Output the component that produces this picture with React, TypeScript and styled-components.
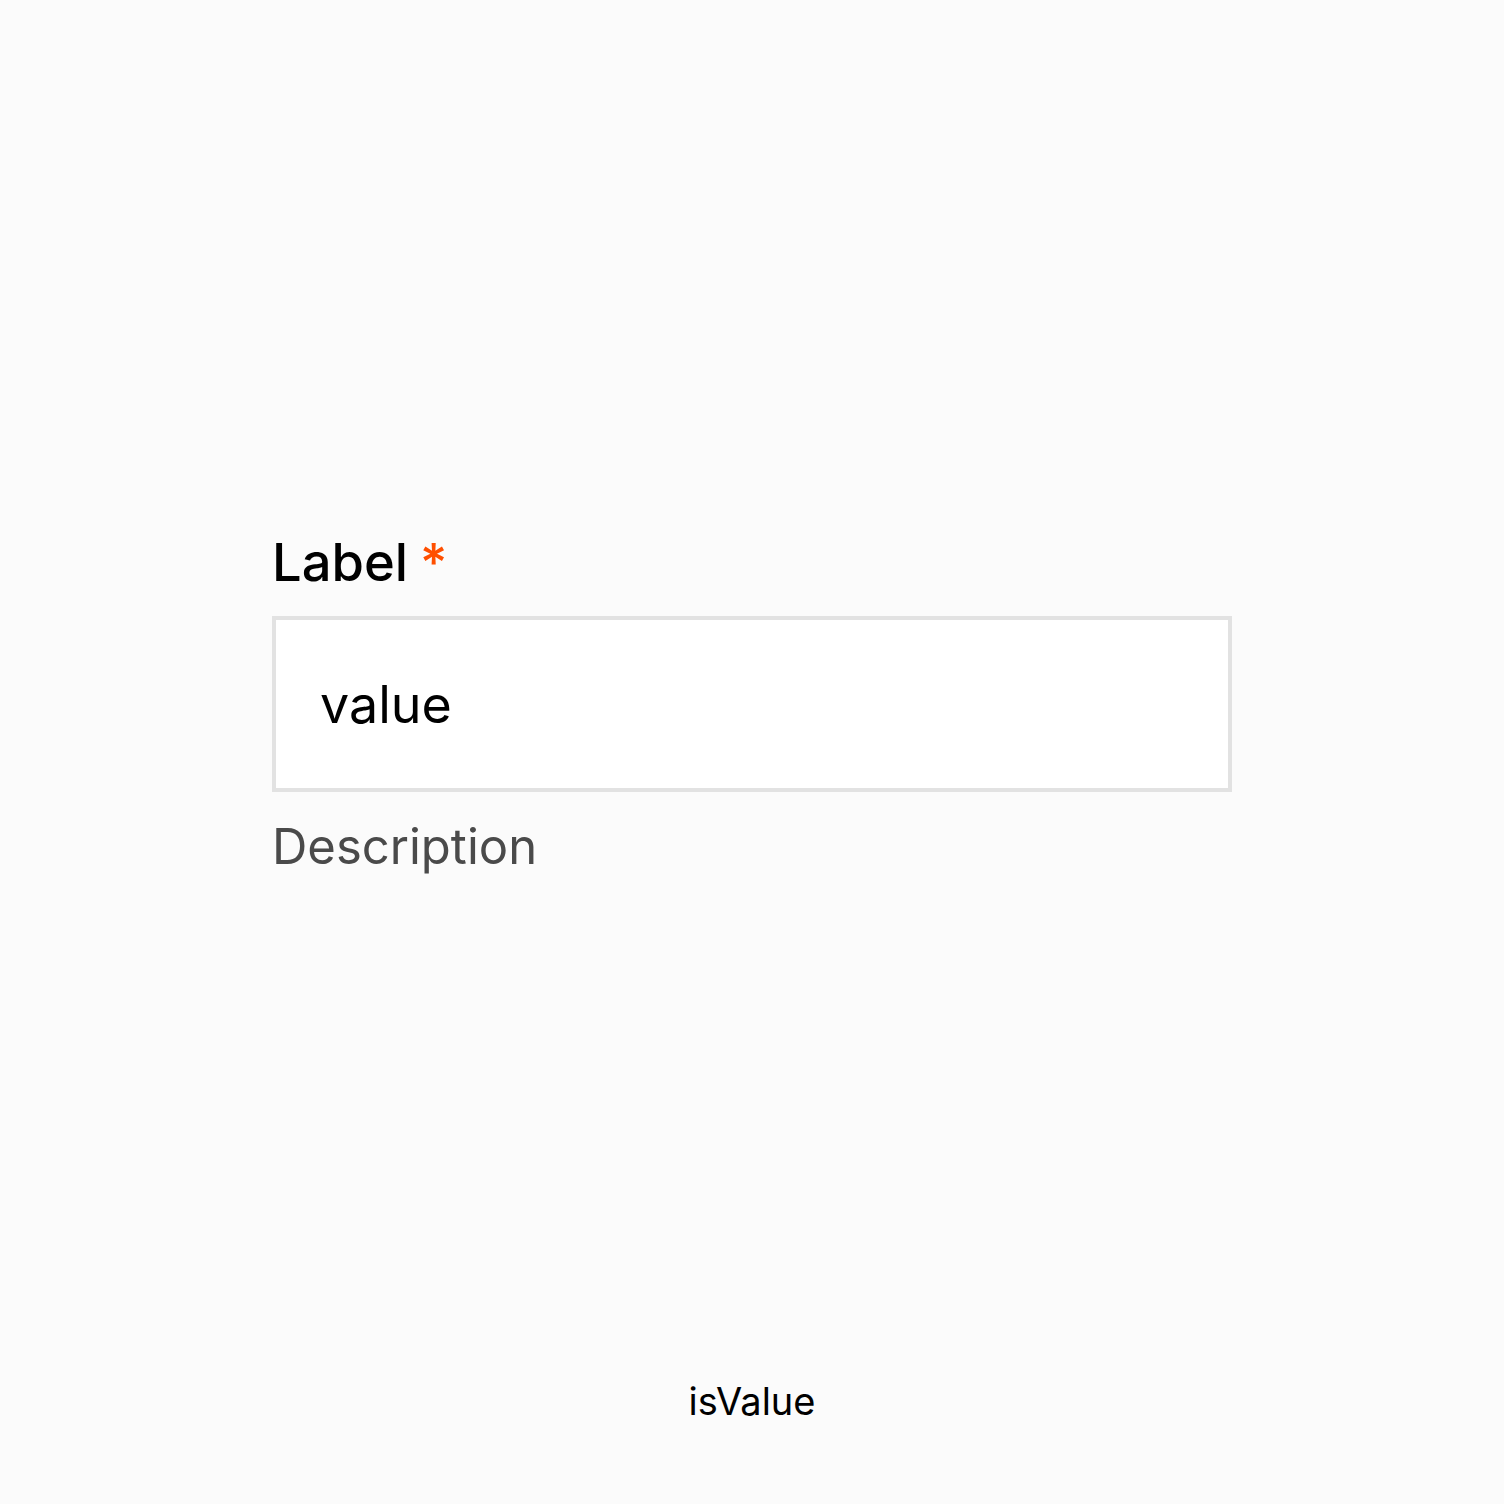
import React from "react";
import styled, { createGlobalStyle } from "styled-components";

const Global = createGlobalStyle`
  html, body { margin: 0; padding: 0; background: #fbfbfb; }
  body { font-family: Inter, "Noto Sans", sans-serif; color: #000; }
`;

const Page = styled.div`
  width: 1504px;
  height: 1504px;
  display: flex;
  flex-direction: column;
  align-items: center;
  box-sizing: border-box;
  padding-top: 530px;
`;

const Field = styled.div`
  width: 960px;
  display: flex;
  flex-direction: column;
  flex: 1;
`;

const LabelRow = styled.label`
  display: flex;
  align-items: baseline;
  gap: 12px;
  font-size: 52.5px;
  font-weight: 500;
  line-height: 64px;
  margin-bottom: 22px;
`;

const Required = styled.span`
  color: #ff4f00;
  font-weight: 500;
`;

const InputBox = styled.div`
  height: 176px;
  box-sizing: border-box;
  border: 4px solid #e2e2e2;
  background: #ffffff;
  display: flex;
  align-items: center;
  padding: 0 44px;
  font-size: 52px;
`;

const Description = styled.div`
  margin-top: 25px;
  font-size: 49px;
  line-height: 60px;
  color: #4a4a4a;
`;

const Footer = styled.div`
  font-size: 38px;
  line-height: 46px;
  padding-bottom: 80px;
`;

export default function App() {
  return (
    <>
      <Global />
      <Page>
        <Field>
          <LabelRow>
            Label<Required>*</Required>
          </LabelRow>
          <InputBox>value</InputBox>
          <Description>Description</Description>
        </Field>
        <Footer>isValue</Footer>
      </Page>
    </>
  );
}
